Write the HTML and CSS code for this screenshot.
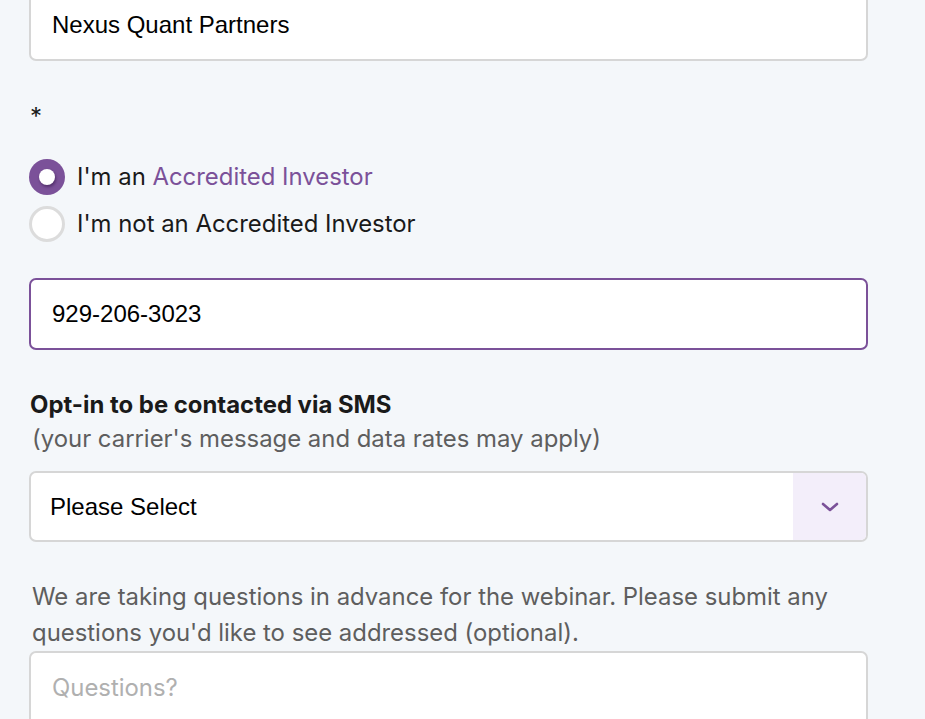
FILE: index.html
```html
<!DOCTYPE html>
<html>
<head>
<meta charset="utf-8">
<link rel="stylesheet" href="styles.css">
</head>
<body>
<form class="form">
  <div class="field field-first">
    <input class="text-input" type="text" value="Nexus Quant Partners">
  </div>

  <div class="field radios">
    <div class="required">*</div>
    <label class="radio-row">
      <span class="radio radio-on"></span>
      <span>I'm an <span class="accent">Accredited Investor</span></span>
    </label>
    <label class="radio-row">
      <span class="radio"></span>
      <span>I'm not an Accredited Investor</span>
    </label>
  </div>

  <div class="field">
    <input class="text-input focused" type="text" value="929-206-3023">
  </div>

  <div class="field">
    <div class="label">Opt-in to be contacted via SMS</div>
    <div class="hint">(your carrier's message and data rates may apply)</div>
    <div class="select">
      <span class="select-value">Please Select</span>
      <span class="select-btn">
        <svg width="18" height="12" viewBox="0 0 18 12"><path d="M2 3 L9 9 L16 3" fill="none" stroke="#7b5199" stroke-width="2.6" stroke-linecap="round" stroke-linejoin="round"/></svg>
      </span>
    </div>
  </div>

  <div class="field">
    <p class="para">We are taking questions in advance for the webinar. Please submit any questions you'd like to see addressed (optional).</p>
    <div class="textarea"><span class="placeholder">Questions?</span></div>
  </div>
</form>
</body>
</html>
```

FILE: styles.css
```css
html, body {
  margin: 0;
  padding: 0;
  background: #f4f7fa;
  overflow: hidden;
  height: 719px;
}
.form {
  width: 839px;
  margin-left: 29px;
  margin-top: -11px;
  font-family: "Inter", "Noto Sans", sans-serif;
  color: #1a1a1a;
}
.field {
  display: flex;
  flex-direction: column;
}
.text-input {
  box-sizing: border-box;
  width: 839px;
  height: 72px;
  border: 2px solid #d6d6d6;
  border-radius: 7px;
  background: #fff;
  padding: 0 21px;
  font-family: "Liberation Sans", Arial, sans-serif;
  font-size: 24px;
  color: #000;
  outline: none;
}
.text-input.focused {
  border-color: #7b5199;
}
.radios {
  padding-top: 43px;
  padding-bottom: 31px;
}
.required {
  font-size: 24px;
  line-height: 26px;
  height: 26px;
  padding-left: 1px;
  margin-bottom: 23px;
}
.radio-row {
  display: flex;
  align-items: center;
  gap: 12px;
  font-size: 23.9px;
  line-height: 47px;
  height: 47px;
}
.radio {
  position: relative;
  box-sizing: border-box;
  width: 36px;
  height: 36px;
  border-radius: 50%;
  border: 3px solid #dcdcdc;
  background: #fff;
  flex: none;
}
.radio-on {
  border: none;
  background: #7b5199;
}
.radio-on::after {
  content: "";
  position: absolute;
  left: 10px;
  top: 10px;
  width: 16px;
  height: 16px;
  border-radius: 50%;
  background: #fff;
  box-shadow: 1px 2px 3px rgba(30, 5, 50, 0.45);
}
.accent {
  color: #7b5199;
}
.label {
  margin-top: 39px;
  font-size: 23.9px;
  font-weight: 700;
  line-height: 32px;
  padding-left: 1px;
}
.hint {
  font-size: 23.9px;
  line-height: 36px;
  color: #5e5e5e;
  padding-left: 3px;
  margin-bottom: 14px;
}
.select {
  box-sizing: border-box;
  height: 71px;
  border: 2px solid #d6d6d6;
  border-radius: 7px;
  background: #fff;
  display: flex;
  overflow: hidden;
}
.select-value {
  flex: 1;
  display: flex;
  align-items: center;
  padding-left: 19px;
  font-family: "Liberation Sans", Arial, sans-serif;
  font-size: 24px;
  color: #000;
}
.select-btn {
  width: 73px;
  background: #f3eefa;
  display: flex;
  align-items: center;
  justify-content: center;
}
.para {
  margin: 37px 0 0 0;
  padding-left: 3px;
  font-size: 23.9px;
  line-height: 36px;
  color: #5e5e5e;
}
.textarea {
  box-sizing: border-box;
  height: 120px;
  border: 2px solid #d6d6d6;
  border-radius: 7px;
  background: #fff;
  padding: 20px 21px;
}
.placeholder {
  font-size: 23.9px;
  color: #b0b0b0;
}
```
